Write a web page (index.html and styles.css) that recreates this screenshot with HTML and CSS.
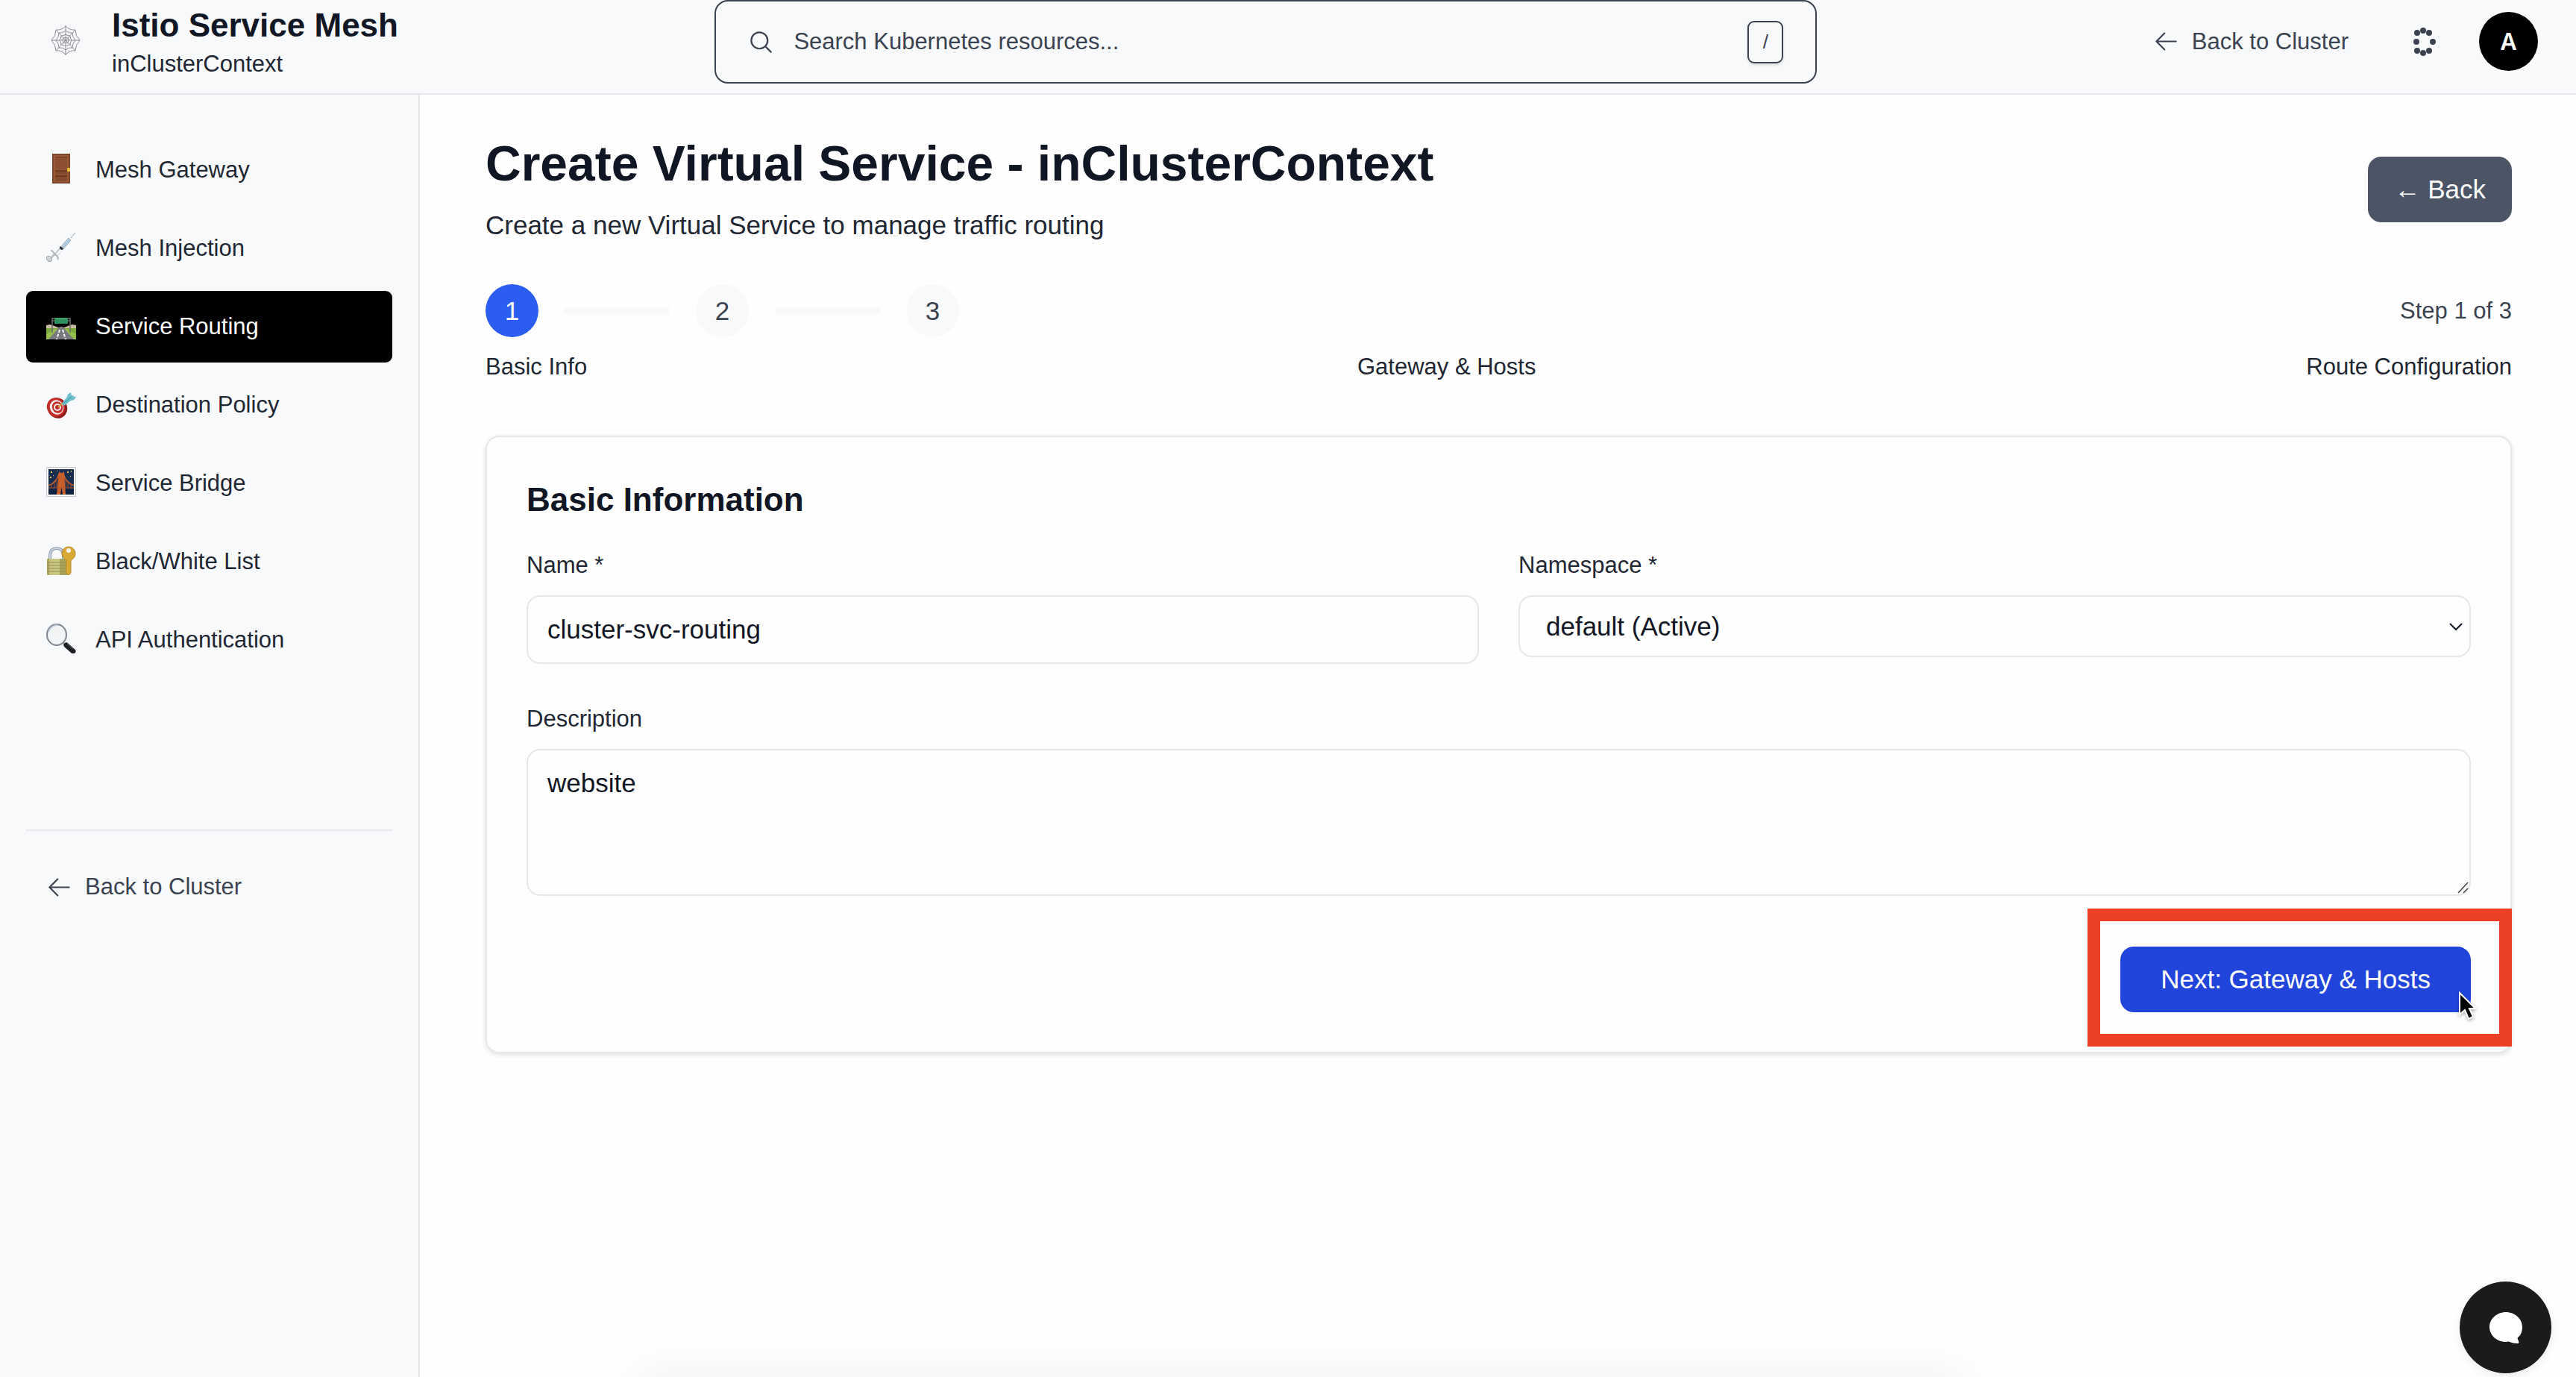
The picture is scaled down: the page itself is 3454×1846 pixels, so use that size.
FILE: index.html
```html
<!DOCTYPE html>
<html lang="en">
<head>
<meta charset="utf-8">
<title>Create Virtual Service - Istio Service Mesh</title>
<meta name="viewport" content="width=device-width, initial-scale=1">
<link rel="stylesheet" href="styles.css">
</head>
<body>
<header class="topbar">
  <div class="brand">
    <svg class="emoji" viewBox="0 0 40 40" fill="none" stroke="#8b8d91" stroke-width="1" aria-hidden="true">
      <path d="M20 0V40M1 20H39M7 6L33 34M33 6L7 34"/>
      <path d="M20 1Q26 7 33 6Q33 14 39 20Q33 26 33 34Q26 33 20 39Q14 33 7 34Q7 26 1 20Q7 14 7 6Q14 7 20 1Z"/>
      <path d="M20 7Q24 11 29 10Q29 16 33 20Q29 24 29 30Q24 29 20 33Q16 29 11 30Q11 24 7 20Q11 16 11 10Q16 11 20 7Z"/>
      <path d="M20 12Q23 14 26 14Q26 17 28 20Q26 23 26 26Q23 26 20 28Q17 26 14 26Q14 23 12 20Q14 17 14 14Q17 14 20 12Z"/>
      <circle cx="20" cy="20" r="4"/>
    </svg>
    <div>
      <div class="brand-title">Istio Service Mesh</div>
      <div class="brand-sub">inClusterContext</div>
    </div>
  </div>
  <div class="search-area">
    <label class="search">
      <svg class="icon" viewBox="0 0 24 24" aria-hidden="true"><path d="m21 21-5.197-5.197m0 0A7.5 7.5 0 1 0 5.196 5.196a7.5 7.5 0 0 0 10.607 10.607Z"/></svg>
      <input class="search-input" type="text" placeholder="Search Kubernetes resources..." aria-label="Search Kubernetes resources">
      <kbd class="key">/</kbd>
    </label>
  </div>
  <div class="actions">
    <a class="back-link" href="#">
      <svg class="icon" viewBox="0 0 24 24" aria-hidden="true"><path d="M10.5 19.5 3 12m0 0 7.5-7.5M3 12h18"/></svg>
      Back to Cluster
    </a>
    <button class="apps" type="button" aria-label="Apps">
      <svg viewBox="0 0 36 40" aria-hidden="true">
        <circle cx="16" cy="5" r="4"/><circle cx="8" cy="8" r="4"/><circle cx="24" cy="8" r="4"/>
        <circle cx="7" cy="20" r="4"/><circle cx="29" cy="20" r="4"/>
        <circle cx="8" cy="32" r="4"/><circle cx="24" cy="32" r="4"/><circle cx="16" cy="35" r="4"/>
      </svg>
    </button>
    <button class="avatar" type="button">A</button>
  </div>
</header>

<div class="shell">
  <aside class="sidebar">
    <nav class="menu">
      <a class="item" href="#">
        <svg class="emoji" viewBox="0 0 40 40" aria-hidden="true">
          <path fill="#7c452a" d="M8 0h24v40H8z"/><path fill="#9a5a38" d="M10 2h20v36H10z"/>
          <path fill="#6d3b23" d="M12 4h16v1.500H12zM12 22h16v2H12zM12 29h16v2H12z"/>
          <path fill="#8d4f31" d="M12 6h16v15H12z"/><path fill="#854a2d" d="M12 24h16v4H12zM12 31h16v6H12z"/>
          <rect x="28" y="19" width="4" height="5" rx="1" fill="#e8bf3d"/>
        </svg>
        Mesh Gateway
      </a>
      <a class="item" href="#">
        <svg class="emoji" viewBox="0 0 40 40" aria-hidden="true">
          <path d="M33 8L39 1" stroke="#9fa6ad" stroke-width="1"/>
          <path d="M11 30L30 8l3 3L14 33z" fill="#d6dbe1" stroke="#a0a6ad"/>
          <path d="M21 20L30 9l2 2L23 22z" fill="#a9cbe3"/>
          <path d="M13 30l7-8 2 2-7 8z" fill="#f5f7f9"/>
          <path d="M18 19l4 2 1 2-3 1-2-2z" fill="#26313d"/>
          <path d="M6 25q3 0 4 3l5 5q2 2 0 4" fill="none" stroke="#b3b8be" stroke-width="2"/>
          <path d="M11 30l-6 6" stroke="#bfc3c9" stroke-width="3"/>
          <ellipse cx="4" cy="36" rx="3" ry="4" transform="rotate(-45 4 36)" fill="#d0d3d7" stroke="#a5a9ae"/>
        </svg>
        Mesh Injection
      </a>
      <a class="item item-active" href="#" aria-current="page">
        <svg class="emoji" viewBox="0 0 40 40" aria-hidden="true">
          <path fill="#c9bba4" d="M0 20l5-1 6 2 5 2h8l5-2 6-2 5 1v6H0z"/>
          <path fill="#7aa63c" d="M0 24h40v15H0z"/><path fill="#95bf4c" d="M0 32l12-7h5L4 39H0zM40 32l-12-7h-5l13 14h4z"/>
          <path fill="#77797d" d="M18 22h4l15 17H3z"/>
          <path stroke="#fff" stroke-width="2" stroke-dasharray="4 2" fill="none" d="M18 26l-4 13M22 26l4 13"/>
          <path stroke="#69706c" stroke-width="1.500" d="M8 10v20M32 10v20M8 11h24M8 14h24"/>
          <path fill="#2e8f5e" d="M11 10h18v8H11z"/><path fill="#55b583" d="M13 11h14v1H13z"/>
        </svg>
        Service Routing
      </a>
      <a class="item" href="#">
        <svg class="emoji" viewBox="0 0 40 40" aria-hidden="true">
          <ellipse cx="15" cy="26" rx="13" ry="14" fill="#8e1c1c" transform="rotate(-25 15 26)"/>
          <ellipse cx="13" cy="25" rx="12" ry="13" fill="#c52d2b" transform="rotate(-25 13 25)"/>
          <ellipse cx="14" cy="25" rx="9" ry="10" fill="#f3eeee" transform="rotate(-25 14 25)"/>
          <ellipse cx="15" cy="25" rx="7" ry="8" fill="#c52d2b" transform="rotate(-25 15 25)"/>
          <ellipse cx="15" cy="25" rx="5" ry="5" fill="#f3eeee"/><circle cx="15" cy="25" r="3" fill="#c52d2b"/>
          <path d="M16 25l8-7" stroke="#c9a23c" stroke-width="2"/>
          <path fill="#6cbfca" d="M21 20l7-9q0-4 5-6l1 5 6 1q-2 5-7 5l-9 7z"/><path d="M23 20l13-11" stroke="#3f94a3"/>
        </svg>
        Destination Policy
      </a>
      <a class="item" href="#">
        <svg class="emoji" viewBox="0 0 40 40" aria-hidden="true">
          <path fill="#fff" stroke="#c2c5c9" d="M.5.5h39v39H.5z"/><path fill="#182e50" d="M3 3h34v34H3z"/>
          <path fill="#0e2140" d="M3 30h34v7H3z"/>
          <path fill="#c9602c" d="M17 7l1-1 1 2h3l1-2 1 1 2 30h-4l-1-8h-1l-1 8h-5z"/>
          <path d="M3 25q11-4 14-16M37 25Q26 21 23 9" fill="none" stroke="#c9602c" stroke-width="1.500"/>
          <path d="M3 28h34M7 24v4M11 20v8M14 16v12M26 16v12M29 20v8M33 24v4" stroke="#a34c2a"/>
          <path fill="#e9c552" d="M6 6h2v2H6zM14 5h1v1h-1zM28 6h2v2h-2zM33 5h1v2h-1zM5 13h2v2H5zM32 12h1v1h-1zM9 11h1v1H9z"/>
        </svg>
        Service Bridge
      </a>
      <a class="item" href="#">
        <svg class="emoji" viewBox="0 0 40 40" aria-hidden="true">
          <path d="M5 20v-7q1-9 9-9t9 9v7" fill="none" stroke="#8d99ab" stroke-width="4"/>
          <path d="M5 20v-7q1-9 9-9t9 9v7" fill="none" stroke="#c9d3e2" stroke-width="2"/>
          <rect x="1" y="18" width="28" height="22" rx="1" fill="#a9a35a"/>
          <path fill="#c9c684" d="M4 18h14v22H4z"/><path stroke="#918c49" d="M1 23h28M1 27h28M1 31h28M1 35h28"/>
          <path fill="#d9a935" stroke="#b98a26" d="M30 2c5 0 9 4 9 9 0 4-2 7-6 9v17l-3 3-3-3v-2l-1-2 1-2-1-2 1-2v-7c-3-2-6-5-6-9 0-5 4-9 9-9z"/>
          <circle cx="30" cy="7" r="3" fill="#f8f9fb"/>
        </svg>
        Black/White List
      </a>
      <a class="item" href="#">
        <svg class="emoji" viewBox="0 0 40 40" aria-hidden="true">
          <path d="M23 26l4 4" stroke="#8e9298" stroke-width="3"/>
          <path d="M27 29l9 8" stroke="#1d1f22" stroke-width="7" stroke-linecap="round"/>
          <path d="M28 27l8 7" stroke="#676b70"/>
          <ellipse cx="14" cy="15" rx="13" ry="14" fill="#f1f3f5" stroke="#7e858e" stroke-width="2"/>
          <path d="M3 11Q7 2 15 2" fill="none" stroke="#bccbdb" stroke-width="2"/>
        </svg>
        API Authentication
      </a>
    </nav>
    <div class="sidebar-foot">
      <a class="back-link" href="#">
        <svg class="icon" viewBox="0 0 24 24" aria-hidden="true"><path d="M10.5 19.5 3 12m0 0 7.5-7.5M3 12h18"/></svg>
        Back to Cluster
      </a>
    </div>
  </aside>

  <main class="content">
    <div class="page-head">
      <div>
        <h1 class="page-title">Create Virtual Service - inClusterContext</h1>
        <p class="page-sub">Create a new Virtual Service to manage traffic routing</p>
      </div>
      <button class="btn btn-gray" type="button">← Back</button>
    </div>

    <div class="stepper">
      <div class="steps">
        <span class="step step-current">1</span><span class="step-line"></span>
        <span class="step">2</span><span class="step-line"></span>
        <span class="step">3</span>
      </div>
      <span class="step-count">Step 1 of 3</span>
    </div>
    <div class="step-labels">
      <span>Basic Info</span><span>Gateway &amp; Hosts</span><span>Route Configuration</span>
    </div>

    <form class="card">
      <h2 class="card-title">Basic Information</h2>
      <div class="fields">
        <div class="field">
          <label class="label" for="name">Name *</label>
          <input class="control" id="name" type="text" value="cluster-svc-routing">
        </div>
        <div class="field">
          <label class="label" for="namespace">Namespace *</label>
          <div class="overlay-wrap">
            <select class="control control-select" id="namespace"><option>default (Active)</option></select>
            <svg class="chevron" viewBox="0 0 20 12" aria-hidden="true"><path d="M2 2l8 8 8-8"/></svg>
          </div>
        </div>
        <div class="field field-wide">
          <label class="label" for="description">Description</label>
          <div class="overlay-wrap">
            <textarea class="control control-area" id="description">website</textarea>
            <svg class="grip" viewBox="0 0 16 16" aria-hidden="true"><path d="M1 15L14 1M8 15l6-6"/></svg>
          </div>
        </div>
      </div>
      <div class="card-foot">
        <div class="overlay-wrap">
          <button class="btn btn-blue" type="button">Next: Gateway &amp; Hosts</button>
          <span class="highlight"></span>
          <svg class="cursor" viewBox="0 0 24 40" aria-hidden="true"><path d="M2 2v29l7-6 5 12 6-3-5-11h8z"/></svg>
        </div>
      </div>
    </form>
  </main>
</div>

<div class="dock-shadow"></div>
<button class="chat" type="button" aria-label="Open chat">
  <svg viewBox="0 0 44 42" aria-hidden="true"><path d="M22 0C34 0 44 9 44 20c0 6-2 11-6 14-1 1 0 2 1 5 1 2 0 3-1 3-5 0-8-1-11-2-2-1-3 0-5 0C10 40 0 31 0 20S10 0 22 0z"/></svg>
</button>
</body>
</html>
```

FILE: styles.css
```css
:root {
  --ink: #111624;
  --text: #1f2733;
  --muted: #3b4350;
  --line: #e5e7eb;
  --panel: #f8f9fb;
  --page: #fefefe;
}

* {
  box-sizing: border-box;
}

body {
  margin: 0;
  min-height: 100vh;
  display: flex;
  flex-direction: column;
  overflow: hidden;
  background: var(--page);
  color: var(--text);
  font: 31px/44px "Liberation Sans", Arial, sans-serif;
}

button,
input,
select,
textarea {
  font: inherit;
  color: inherit;
}

a {
  color: inherit;
  text-decoration: none;
}

/* Top bar */
.topbar {
  display: flex;
  align-items: flex-start;
  height: 127px;
  border-bottom: 2px solid var(--line);
  background: var(--panel);
}

.brand {
  display: flex;
  gap: 42px;
  min-width: 558px;
  padding: 7px 0 0 68px;
}

.brand .emoji {
  margin-top: 27px;
}

.brand-title {
  margin-bottom: 4px;
  color: var(--ink);
  font-size: 44px;
  line-height: 53px;
  font-weight: 700;
  white-space: nowrap;
}

.emoji {
  flex: none;
  width: 40px;
  height: 40px;
}

.icon {
  flex: none;
  width: 35px;
  height: 35px;
  fill: none;
  stroke: currentColor;
  stroke-width: 1.5;
  stroke-linecap: round;
  stroke-linejoin: round;
}

.search-area {
  flex: 1;
  display: flex;
  justify-content: center;
}

.search {
  flex: 1;
  max-width: 1478px;
  height: 112px;
  display: flex;
  align-items: center;
  gap: 26px;
  padding: 0 43px;
  border: 2px solid var(--muted);
  border-radius: 18px;
  color: var(--muted);
}

.search-input {
  flex: 1;
  min-width: 0;
  padding: 0;
  border: 0;
  outline: 0;
  background: none;
}

.search-input::placeholder {
  color: var(--muted);
  opacity: 1;
}

.key {
  width: 48px;
  height: 57px;
  border: 2px solid var(--muted);
  border-radius: 9px;
  box-shadow: 0 2px 4px rgba(0, 0, 0, 0.12);
  font: 26px/53px "Liberation Sans", Arial, sans-serif;
  text-align: center;
}

.actions {
  height: 111px;
  display: flex;
  align-items: center;
  padding: 0 51px 0 50px;
}

.back-link {
  display: flex;
  align-items: center;
  gap: 17px;
  color: var(--muted);
  white-space: nowrap;
}

.apps {
  margin: 0 55px 0 84px;
  padding: 0;
  border: 0;
  background: none;
}

.apps svg {
  display: block;
  width: 36px;
  height: 40px;
  fill: var(--muted);
}

.avatar {
  width: 79px;
  height: 79px;
  padding: 0;
  border: 0;
  border-radius: 50%;
  background: #000;
  color: #fff;
  font-family: Inter, "Liberation Sans", sans-serif;
  font-weight: 600;
}

/* Sidebar */
.shell {
  flex: 1;
  display: flex;
}

.sidebar {
  flex: none;
  width: 563px;
  padding: 53px 35px;
  border-right: 2px solid var(--line);
  background: var(--panel);
}

.menu {
  display: flex;
  flex-direction: column;
  gap: 9px;
}

.item {
  display: flex;
  align-items: center;
  gap: 26px;
  height: 96px;
  padding: 0 27px;
  border-radius: 9px;
}

.item .emoji {
  margin-bottom: 4px;
}

.item-active {
  background: #000;
  color: #fff;
}

.sidebar-foot {
  margin-top: 206px;
  padding: 53px 27px;
  border-top: 2px solid var(--line);
}

/* Page content */
.content {
  flex: 1;
  min-width: 0;
  padding: 53px 86px 88px 88px;
}

.page-head,
.stepper,
.steps,
.step-labels {
  display: flex;
  align-items: center;
  justify-content: space-between;
}

.page-title {
  margin: 0;
  color: var(--ink);
  font-size: 66px;
  line-height: 79px;
}

.page-sub {
  margin: 16px 0 0;
  font-size: 35px;
  line-height: 53px;
}

.btn {
  display: block;
  height: 88px;
  padding: 0 35px;
  border: 0;
  border-radius: 18px;
  color: #fff;
  font-size: 35px;
}

.btn-gray {
  background: #4b5565;
}

.btn-blue {
  padding: 0 54px;
  background: #2144db;
}

.stepper {
  margin-top: 53px;
  color: var(--muted);
}

.steps {
  gap: 35px;
}

.step {
  width: 71px;
  height: 71px;
  border-radius: 50%;
  background: var(--panel);
  font-size: 35px;
  line-height: 71px;
  text-align: center;
}

.step-current {
  background: #2b5df0;
  color: #fff;
}

.step-line {
  width: 141px;
  height: 9px;
  background: var(--panel);
}

.step-labels {
  margin-top: 18px;
}

/* Form card */
.card {
  margin-top: 70px;
  padding: 53px;
  border: 2px solid var(--line);
  border-radius: 18px;
  box-shadow: 0 2px 6px rgba(0, 0, 0, 0.12);
}

.card-title {
  margin: 0 0 35px;
  color: var(--ink);
  font-size: 44px;
  line-height: 62px;
}

.fields {
  display: grid;
  grid-template-columns: 1fr 1fr;
  gap: 52px 53px;
}

.field-wide {
  grid-column: 1 / -1;
}

.label {
  display: block;
  margin-bottom: 18px;
}

.control {
  display: block;
  width: 100%;
  height: 92px;
  padding: 0 26px;
  border: 2px solid var(--line);
  border-radius: 18px;
  outline: 0;
  background: var(--page);
  color: var(--ink);
  font-size: 35px;
}

.overlay-wrap {
  position: relative;
}

.control-select {
  height: 83px;
  padding: 0 35px;
  appearance: none;
}

.chevron {
  position: absolute;
  top: 36px;
  right: 10px;
  width: 20px;
  height: 12px;
  fill: none;
  stroke: var(--ink);
  stroke-width: 2;
  pointer-events: none;
}

.control-area {
  height: 197px;
  padding: 17px 26px;
  line-height: 53px;
  resize: none;
}

.grip {
  position: absolute;
  right: 2px;
  bottom: 3px;
  width: 16px;
  height: 16px;
  fill: none;
  stroke: #444;
  stroke-width: 1.5;
}

.card-foot {
  display: flex;
  justify-content: flex-end;
  margin-top: 68px;
}

.highlight {
  position: absolute;
  inset: -51px -55px -46px -44px;
  border: 17px solid #ec4026;
  pointer-events: none;
}

.cursor {
  position: absolute;
  right: -7px;
  bottom: -12px;
  width: 24px;
  height: 40px;
  fill: #000;
  stroke: #fff;
  stroke-width: 2;
  filter: drop-shadow(0 2px 2px rgba(0, 0, 0, 0.3));
  pointer-events: none;
}

/* Overlays */
.dock-shadow {
  position: fixed;
  left: 25%;
  right: 24%;
  bottom: -24px;
  height: 10px;
  box-shadow: 0 0 60px 6px rgba(0, 0, 0, 0.12);
}

.chat {
  position: fixed;
  right: 33px;
  bottom: 5px;
  width: 123px;
  height: 123px;
  display: grid;
  place-items: center;
  padding: 0;
  border: 0;
  border-radius: 50%;
  background: #1b1b1b;
  box-shadow: 0 4px 12px rgba(0, 0, 0, 0.08);
}

.chat svg {
  width: 44px;
  height: 42px;
  fill: #fff;
}
```
